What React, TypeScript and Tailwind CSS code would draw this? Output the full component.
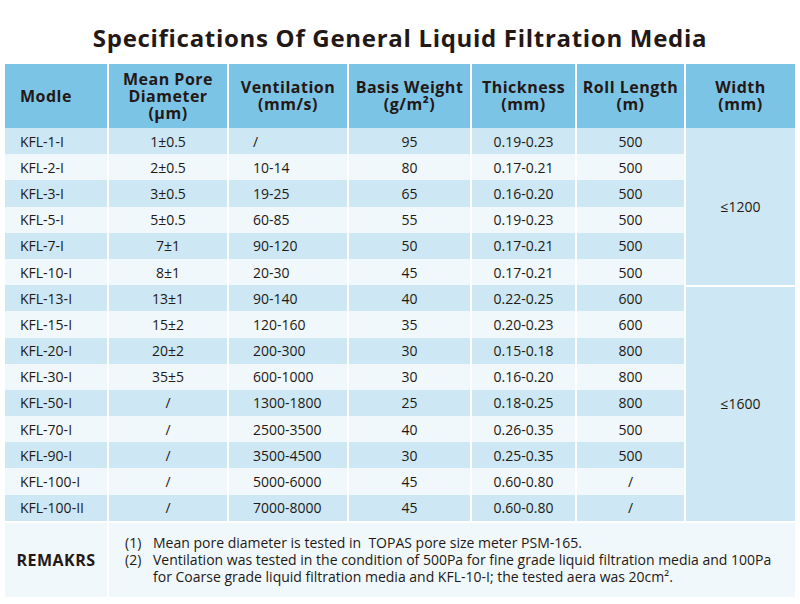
const ROWS = [
  ["KFL-1-I", "1±0.5", "/", "95", "0.19-0.23", "500"],
  ["KFL-2-I", "2±0.5", "10-14", "80", "0.17-0.21", "500"],
  ["KFL-3-I", "3±0.5", "19-25", "65", "0.16-0.20", "500"],
  ["KFL-5-I", "5±0.5", "60-85", "55", "0.19-0.23", "500"],
  ["KFL-7-I", "7±1", "90-120", "50", "0.17-0.21", "500"],
  ["KFL-10-I", "8±1", "20-30", "45", "0.17-0.21", "500"],
  ["KFL-13-I", "13±1", "90-140", "40", "0.22-0.25", "600"],
  ["KFL-15-I", "15±2", "120-160", "35", "0.20-0.23", "600"],
  ["KFL-20-I", "20±2", "200-300", "30", "0.15-0.18", "800"],
  ["KFL-30-I", "35±5", "600-1000", "30", "0.16-0.20", "800"],
  ["KFL-50-I", "/", "1300-1800", "25", "0.18-0.25", "800"],
  ["KFL-70-I", "/", "2500-3500", "40", "0.26-0.35", "500"],
  ["KFL-90-I", "/", "3500-4500", "30", "0.25-0.35", "500"],
  ["KFL-100-I", "/", "5000-6000", "45", "0.60-0.80", "/"],
  ["KFL-100-II", "/", "7000-8000", "45", "0.60-0.80", "/"],
];

const FONT = "font-['Open_Sans','Noto_Sans',sans-serif]";

function HeadCell({ lines, left }: { lines: string[]; left?: boolean }) {
  return (
    <div
      className={`flex flex-col justify-center bg-[#7cc4e5] text-[16px] font-bold leading-[17px] tracking-[0.5px] text-[#231815] ${
        left ? "items-start pl-[15px]" : "items-center text-center"
      }`}
    >
      {lines.map((l) => (
        <span key={l}>{l}</span>
      ))}
    </div>
  );
}

export default function App() {
  return (
    <div className={`h-[604px] w-[800px] bg-white ${FONT} text-[#231815]`}>
      <h1 className="flex h-[64px] items-start justify-center pt-[22px] text-[24px] font-bold leading-[32px] tracking-[0.7px]">
        Specifications Of General Liquid Filtration Media
      </h1>
      <div className="mx-[5px] grid grid-cols-[102px_118px_118px_121px_103px_107px_109px] grid-rows-[64px_repeat(15,26.2px)_auto] gap-x-[2px] text-[14px]">
        <HeadCell lines={["Modle"]} left />
        <HeadCell lines={["Mean Pore", "Diameter", "(μm)"]} />
        <HeadCell lines={["Ventilation", "(mm/s)"]} />
        <HeadCell lines={["Basis Weight", "(g/m²)"]} />
        <HeadCell lines={["Thickness", "(mm)"]} />
        <HeadCell lines={["Roll Length", "(m)"]} />
        <HeadCell lines={["Width", "(mm)"]} />

        {ROWS.map((r, i) => {
          const bg = i % 2 === 0 ? "bg-[#cde8f4]" : "bg-[#f1f8fc]";
          return [
            <div key={`${i}a`} className={`${bg} col-start-1 flex items-center pl-[15px]`} style={{ gridRowStart: i + 2 }}>
              {r[0]}
            </div>,
            <div key={`${i}b`} className={`${bg} col-start-2 flex items-center justify-center`} style={{ gridRowStart: i + 2 }}>
              {r[1]}
            </div>,
            <div key={`${i}c`} className={`${bg} col-start-3 flex items-center pl-[24px]`} style={{ gridRowStart: i + 2 }}>
              {r[2]}
            </div>,
            <div key={`${i}d`} className={`${bg} col-start-4 flex items-center justify-center`} style={{ gridRowStart: i + 2 }}>
              {r[3]}
            </div>,
            <div key={`${i}e`} className={`${bg} col-start-5 flex items-center justify-center`} style={{ gridRowStart: i + 2 }}>
              {r[4]}
            </div>,
            <div key={`${i}f`} className={`${bg} col-start-6 flex items-center justify-center`} style={{ gridRowStart: i + 2 }}>
              {r[5]}
            </div>,
          ];
        })}

        <div className="col-start-7 row-start-2 row-span-6 flex items-center justify-center bg-[#cde8f4]">
          ≤1200
        </div>
        <div className="col-start-7 row-start-8 row-span-9 flex items-center justify-center border-t-2 border-white bg-[#cde8f4]">
          ≤1600
        </div>

        <div className="col-start-1 row-start-17 mt-[2px] flex h-[74px] items-center justify-center bg-[#f1f8fc] text-[16px] font-bold tracking-[0.5px]">
          REMAKRS
        </div>
        <div className="col-span-6 col-start-2 row-start-17 mt-[2px] flex flex-col justify-center bg-[#f1f8fc] pl-[16px] text-[14px] leading-[17px]">
          <div className="flex">
            <span className="w-[28px] shrink-0">(1)</span>
            <span>Mean pore diameter is tested in&nbsp; TOPAS pore size meter PSM-165.</span>
          </div>
          <div className="flex">
            <span className="w-[28px] shrink-0">(2)</span>
            <span>
              Ventilation was tested in the condition of 500Pa for fine grade liquid filtration media and 100Pa
              <br />
              for Coarse grade liquid filtration media and KFL-10-I; the tested aera was 20cm².
            </span>
          </div>
        </div>
      </div>
    </div>
  );
}
